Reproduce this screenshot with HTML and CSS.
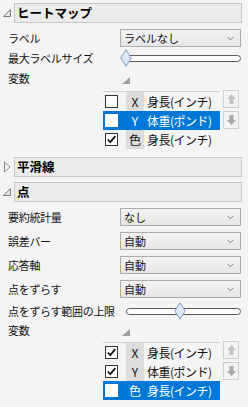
FILE: index.html
```html
<!DOCTYPE html>
<html lang="ja">
<head>
<meta charset="utf-8">
<link rel="stylesheet" href="styles.css">
</head>
<body>
<div class="panel">

  <section class="outline heat">
    <div class="ohead">
      <span class="tri"><svg width="10" height="10" viewBox="0 0 10 10"><polygon points="1.5,8.5 8.5,8.5 8.5,1.5" fill="#e6e6e6" stroke="#7c7c7c" stroke-width="1"/></svg></span>
      <div class="otitle">ヒートマップ</div>
    </div>
    <div class="obody">
      <div class="lbl r20">ラベル</div>
      <div class="ctl r20"><div class="select"><span>ラベルなし</span><svg class="chev" width="7" height="5" viewBox="0 0 7 5"><polyline points="0.5,0.8 3.5,3.8 6.5,0.8" fill="none" stroke="#7a7a7a" stroke-width="1"/></svg></div></div>
      <div class="lbl r20">最大ラベルサイズ</div>
      <div class="ctl r20"><div class="slider"><div class="track"></div><svg class="thumb" style="left:-6px" width="12" height="18" viewBox="0 0 12 18"><polygon points="6,0.8 11.2,9 6,17.2 0.8,9" fill="#dce9f8" stroke="#7f9bc0" stroke-width="1"/></svg></div></div>
      <div class="lbl r20">変数</div>
      <div class="ctl r20"><svg class="vtri" width="8" height="7" viewBox="0 0 8 7"><polygon points="0,7 8,7 8,0" fill="#a0a0a0"/></svg></div>
    </div>
    <div class="varlist">
      <div class="vbox">
        <div class="vrow"><span class="cb"></span><span class="role">X</span><span class="vname">身長(インチ)</span></div>
        <div class="vrow sel"><span class="cb"></span><span class="role">Y</span><span class="vname">体重(ポンド)</span></div>
        <div class="vrow"><span class="cb"><svg width="11" height="11" viewBox="0 0 11 11"><polyline points="1.8,5.5 4.3,8.2 9.3,2.2" fill="none" stroke="#111" stroke-width="1.8"/></svg></span><span class="role">色</span><span class="vname">身長(インチ)</span></div>
      </div>
      <div class="btns">
        <span class="abtn"><svg width="9" height="10" viewBox="0 0 9 10"><polygon points="4.5,0 9,5 6.5,5 6.5,10 2.5,10 2.5,5 0,5" fill="#c3c3c3"/></svg></span>
        <span class="abtn"><svg width="9" height="10" viewBox="0 0 9 10"><polygon points="4.5,10 9,5 6.5,5 6.5,0 2.5,0 2.5,5 0,5" fill="#a8a8a8"/></svg></span>
      </div>
    </div>
  </section>

  <section class="outline smooth">
    <div class="ohead">
      <span class="tri"><svg width="8" height="12" viewBox="0 0 8 12"><polygon points="1.5,1 7,6 1.5,11" fill="#f4f4f4" stroke="#8a8a8a" stroke-width="1"/></svg></span>
      <div class="otitle">平滑線</div>
    </div>
  </section>

  <section class="outline points">
    <div class="ohead">
      <span class="tri"><svg width="10" height="10" viewBox="0 0 10 10"><polygon points="1.5,8.5 8.5,8.5 8.5,1.5" fill="#e6e6e6" stroke="#7c7c7c" stroke-width="1"/></svg></span>
      <div class="otitle">点</div>
    </div>
    <div class="obody">
      <div class="lbl r24">要約統計量</div>
      <div class="ctl r24"><div class="select"><span>なし</span><svg class="chev" width="7" height="5" viewBox="0 0 7 5"><polyline points="0.5,0.8 3.5,3.8 6.5,0.8" fill="none" stroke="#7a7a7a" stroke-width="1"/></svg></div></div>
      <div class="lbl r24">誤差バー</div>
      <div class="ctl r24"><div class="select"><span>自動</span><svg class="chev" width="7" height="5" viewBox="0 0 7 5"><polyline points="0.5,0.8 3.5,3.8 6.5,0.8" fill="none" stroke="#7a7a7a" stroke-width="1"/></svg></div></div>
      <div class="lbl r24">応答軸</div>
      <div class="ctl r24"><div class="select"><span>自動</span><svg class="chev" width="7" height="5" viewBox="0 0 7 5"><polyline points="0.5,0.8 3.5,3.8 6.5,0.8" fill="none" stroke="#7a7a7a" stroke-width="1"/></svg></div></div>
      <div class="lbl r24">点をずらす</div>
      <div class="ctl r24"><div class="select"><span>自動</span><svg class="chev" width="7" height="5" viewBox="0 0 7 5"><polyline points="0.5,0.8 3.5,3.8 6.5,0.8" fill="none" stroke="#7a7a7a" stroke-width="1"/></svg></div></div>
      <div class="lbl r20">点をずらす範囲の上限</div>
      <div class="ctl r20"><div class="slider"><div class="track"></div><svg class="thumb" style="left:48px" width="12" height="18" viewBox="0 0 12 18"><polygon points="6,0.8 11.2,9 6,17.2 0.8,9" fill="#dce9f8" stroke="#7f9bc0" stroke-width="1"/></svg></div></div>
      <div class="lbl r18">変数</div>
      <div class="ctl r18"><svg class="vtri" width="8" height="7" viewBox="0 0 8 7"><polygon points="0,7 8,7 8,0" fill="#a0a0a0"/></svg></div>
    </div>
    <div class="varlist">
      <div class="vbox">
        <div class="vrow"><span class="cb"><svg width="11" height="11" viewBox="0 0 11 11"><polyline points="1.8,5.5 4.3,8.2 9.3,2.2" fill="none" stroke="#111" stroke-width="1.8"/></svg></span><span class="role">X</span><span class="vname">身長(インチ)</span></div>
        <div class="vrow"><span class="cb"><svg width="11" height="11" viewBox="0 0 11 11"><polyline points="1.8,5.5 4.3,8.2 9.3,2.2" fill="none" stroke="#111" stroke-width="1.8"/></svg></span><span class="role">Y</span><span class="vname">体重(ポンド)</span></div>
        <div class="vrow sel"><span class="cb"></span><span class="role">色</span><span class="vname">身長(インチ)</span></div>
      </div>
      <div class="btns">
        <span class="abtn"><svg width="9" height="10" viewBox="0 0 9 10"><polygon points="4.5,0 9,5 6.5,5 6.5,10 2.5,10 2.5,5 0,5" fill="#c3c3c3"/></svg></span>
        <span class="abtn"><svg width="9" height="10" viewBox="0 0 9 10"><polygon points="4.5,10 9,5 6.5,5 6.5,0 2.5,0 2.5,5 0,5" fill="#a8a8a8"/></svg></span>
      </div>
    </div>
  </section>

</div>
</body>
</html>
```

FILE: styles.css
```css
html, body {
  margin: 0;
  padding: 0;
}
body {
  background: #f4f4f4;
  width: 248px;
  height: 407px;
  overflow: hidden;
  font-family: "Noto Sans CJK JP", "Noto Sans", sans-serif;
  font-size: 11px;
  color: #111;
}
.panel {
  display: flex;
  flex-direction: column;
}
.ohead {
  display: flex;
  align-items: center;
  height: 20px;
}
.heat .ohead { margin-top: 3px; }
.smooth .ohead { margin-top: 8px; }
.points .ohead { margin-top: 5px; }
.tri {
  width: 14px;
  height: 20px;
  display: flex;
  align-items: center;
  justify-content: center;
}
.otitle {
  width: 228px;
  height: 20px;
  box-sizing: border-box;
  border: 1px solid #c8c8c8;
  background: #ebebeb;
  font-weight: bold;
  font-size: 12.5px;
  line-height: 18px;
  padding-left: 2px;
  color: #000;
}
.obody {
  display: grid;
  grid-template-columns: 112px 121px;
  padding-left: 8px;
}
.heat .obody { margin-top: 5px; }
.points .obody { margin-top: 3px; }
.r20 { height: 20px; }
.r24 { height: 24px; }
.r18 { height: 18px; }
.lbl {
  display: flex;
  align-items: center;
  white-space: nowrap;
  letter-spacing: -0.3px;
}
.ctl {
  display: flex;
  align-items: center;
}
.select {
  width: 121px;
  height: 18px;
  box-sizing: border-box;
  border: 1px solid #adadad;
  background: linear-gradient(#f3f3f3, #e6e6e6);
  display: flex;
  align-items: center;
  justify-content: space-between;
  padding: 0 6px 0 3px;
}
.chev { display: block; }
.slider {
  position: relative;
  width: 116px;
  height: 18px;
  margin-left: 6px;
}
.track {
  position: absolute;
  left: 0;
  right: 0;
  top: 6px;
  height: 7px;
  box-sizing: border-box;
  border: 1px solid #5a5a5a;
  border-radius: 4px;
  background: #fff;
}
.thumb {
  position: absolute;
  top: 0;
}
.vtri {
  display: block;
  margin-left: 2px;
  margin-top: 4px;
}
.varlist {
  display: flex;
  margin-left: 103px;
  margin-top: 3px;
}
.vbox {
  width: 117px;
  border-top: 1px solid #d0d0d0;
}
.vrow {
  display: flex;
  align-items: center;
  height: 19px;
  color: #111;
  font-size: 12px;
  overflow: hidden;
}
.vrow.sel {
  background: #0078d7;
  color: #fff;
}
.cb {
  width: 13px;
  height: 13px;
  box-sizing: border-box;
  border: 1px solid #333;
  background: #fff;
  margin-left: 2px;
  display: flex;
  align-items: center;
  justify-content: center;
  flex: none;
}
.sel .cb { border-color: #fff; }
.role {
  width: 18px;
  height: 19px;
  margin-left: 8px;
  background: #dcdcdc;
  display: flex;
  align-items: center;
  justify-content: center;
  font-size: 12px;
  flex: none;
}
.sel .role { background: transparent; }
.vname {
  margin-left: 3px;
  white-space: nowrap;
  letter-spacing: -0.5px;
}
.btns {
  display: flex;
  flex-direction: column;
  gap: 3px;
  margin-left: 3px;
  margin-top: -1px;
}
.abtn {
  width: 16px;
  height: 18px;
  box-sizing: border-box;
  border: 1px solid #cfcfcf;
  background: #f3f3f3;
  display: flex;
  align-items: center;
  justify-content: center;
}
```
